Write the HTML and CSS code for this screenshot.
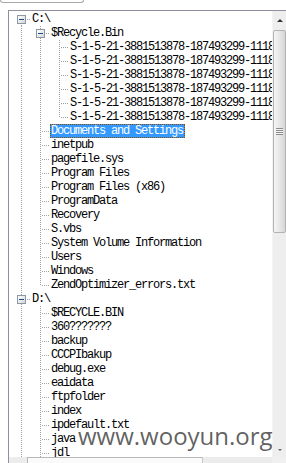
FILE: index.html
```html
<!DOCTYPE html>
<html>
<head>
<meta charset="utf-8">
<link rel="stylesheet" href="styles.css">
</head>
<body>
<div class="topbox"></div>
<div class="panel">
  <div class="tree">
    <div class="row"><i class="g fm"><b class="box"></b></i><span class="lbl">C:\</span></div>
    <div class="row"><i class="g v"></i><i class="g t"><b class="box"></b></i><span class="lbl">$Recycle.Bin</span></div>
    <div class="row"><i class="g v"></i><i class="g v"></i><i class="g t"></i><span class="lbl">S-1-5-21-3881513878-187493299-1118740447-500</span></div>
    <div class="row"><i class="g v"></i><i class="g v"></i><i class="g t"></i><span class="lbl">S-1-5-21-3881513878-187493299-1118740447-1000</span></div>
    <div class="row"><i class="g v"></i><i class="g v"></i><i class="g t"></i><span class="lbl">S-1-5-21-3881513878-187493299-1118740447-1001</span></div>
    <div class="row"><i class="g v"></i><i class="g v"></i><i class="g t"></i><span class="lbl">S-1-5-21-3881513878-187493299-1118740447-1002</span></div>
    <div class="row"><i class="g v"></i><i class="g v"></i><i class="g t"></i><span class="lbl">S-1-5-21-3881513878-187493299-1118740447-1003</span></div>
    <div class="row"><i class="g v"></i><i class="g v"></i><i class="g l"></i><span class="lbl">S-1-5-21-3881513878-187493299-1118740447-1004</span></div>
    <div class="row"><i class="g v"></i><i class="g t"></i><span class="lbl sel">Documents and Settings</span></div>
    <div class="row"><i class="g v"></i><i class="g t"></i><span class="lbl">inetpub</span></div>
    <div class="row"><i class="g v"></i><i class="g t"></i><span class="lbl">pagefile.sys</span></div>
    <div class="row"><i class="g v"></i><i class="g t"></i><span class="lbl">Program Files</span></div>
    <div class="row"><i class="g v"></i><i class="g t"></i><span class="lbl">Program Files (x86)</span></div>
    <div class="row"><i class="g v"></i><i class="g t"></i><span class="lbl">ProgramData</span></div>
    <div class="row"><i class="g v"></i><i class="g t"></i><span class="lbl">Recovery</span></div>
    <div class="row"><i class="g v"></i><i class="g t"></i><span class="lbl">S.vbs</span></div>
    <div class="row"><i class="g v"></i><i class="g t"></i><span class="lbl">System Volume Information</span></div>
    <div class="row"><i class="g v"></i><i class="g t"></i><span class="lbl">Users</span></div>
    <div class="row"><i class="g v"></i><i class="g t"></i><span class="lbl">Windows</span></div>
    <div class="row"><i class="g v"></i><i class="g l"></i><span class="lbl">ZendOptimizer_errors.txt</span></div>
    <div class="row"><i class="g t"><b class="box"></b></i><span class="lbl">D:\</span></div>
    <div class="row"><i class="g v"></i><i class="g t"></i><span class="lbl">$RECYCLE.BIN</span></div>
    <div class="row"><i class="g v"></i><i class="g t"></i><span class="lbl">360???????</span></div>
    <div class="row"><i class="g v"></i><i class="g t"></i><span class="lbl">backup</span></div>
    <div class="row"><i class="g v"></i><i class="g t"></i><span class="lbl">CCCPIbakup</span></div>
    <div class="row"><i class="g v"></i><i class="g t"></i><span class="lbl">debug.exe</span></div>
    <div class="row"><i class="g v"></i><i class="g t"></i><span class="lbl">eaidata</span></div>
    <div class="row"><i class="g v"></i><i class="g t"></i><span class="lbl">ftpfolder</span></div>
    <div class="row"><i class="g v"></i><i class="g t"></i><span class="lbl">index</span></div>
    <div class="row"><i class="g v"></i><i class="g t"></i><span class="lbl">ipdefault.txt</span></div>
    <div class="row"><i class="g v"></i><i class="g t"></i><span class="lbl">java</span></div>
    <div class="row"><i class="g v"></i><i class="g t"></i><span class="lbl">jdl</span></div>
    <div class="row"><i class="g v"></i><i class="g t"></i><span class="lbl">log</span></div>
  </div>
  <div class="vscroll">
    <div class="arrow up"></div>
    <div class="thumb"><span class="grip"></span></div>
    <div class="arrow down"></div>
  </div>
  <div class="hscroll">
    <div class="harrow"></div>
    <div class="hthumb"></div>
  </div>
  <div class="corner"></div>
</div>
<div class="watermark">www.wooyun.org</div>
</body>
</html>
```
FILE: styles.css
```css
html, body {
  margin: 0;
  padding: 0;
  background: #fff;
}
body {
  width: 286px;
  height: 463px;
  overflow: hidden;
  position: relative;
  font-family: "Liberation Mono", "Noto Sans CJK SC", monospace;
  font-size: 12px;
  letter-spacing: -1.2px;
  color: #000;
}
.topbox {
  width: 82px;
  height: 2px;
  border: 1px solid #a9a9a9;
  border-top: none;
  border-radius: 0 0 3px 3px;
  box-sizing: content-box;
}
.panel {
  margin: 7px 0 0 8px;
  height: 453px;
  border-top: 1px solid #8e8f9f;
  border-left: 1px solid #8e8f9f;
  display: grid;
  grid-template-columns: 1fr 14px;
  grid-template-rows: 446px 6px;
  overflow: hidden;
}
.tree {
  padding: 1px 0 0 3px;
  overflow: hidden;
}
.row {
  display: flex;
  height: 14px;
  align-items: stretch;
  white-space: nowrap;
}
.g {
  flex: none;
  width: 19px;
  height: 14px;
  position: relative;
}
.g::before, .g::after {
  content: "";
  position: absolute;
}
.v::before, .t::before {
  left: 9px;
  top: 0;
  width: 1px;
  height: 14px;
  background: repeating-linear-gradient(to bottom, #a0a0a0 0 1px, transparent 1px 2px);
}
.l::before {
  left: 9px;
  top: 0;
  width: 1px;
  height: 8px;
  background: repeating-linear-gradient(to bottom, #a0a0a0 0 1px, transparent 1px 2px);
}
.fm::before {
  left: 9px;
  top: 7px;
  width: 1px;
  height: 7px;
  background: repeating-linear-gradient(to bottom, #a0a0a0 0 1px, transparent 1px 2px);
}
.t::after, .l::after, .fm::after {
  left: 10px;
  top: 7px;
  width: 9px;
  height: 1px;
  background: repeating-linear-gradient(to right, transparent 0 1px, #a0a0a0 1px 2px);
}
.box {
  position: absolute;
  left: 5px;
  top: 3px;
  width: 9px;
  height: 9px;
  box-sizing: border-box;
  border: 1px solid #8c97a5;
  background: linear-gradient(135deg, #ffffff 0%, #e8e8e8 60%, #cfd3d8 100%);
  z-index: 1;
}
.box::after {
  content: "";
  position: absolute;
  left: 1px;
  top: 3px;
  width: 5px;
  height: 1px;
  background: #1f4a9a;
}
.lbl {
  display: block;
  line-height: 14px;
  padding: 0 1px;
  box-sizing: border-box;
  height: 14px;
}
.sel {
  background: #3399ff;
  color: #fff;
  border: 1px dotted #8a4a00;
  line-height: 12px;
  padding: 0 1px 0 0;
}
.vscroll {
  grid-row: 1;
  grid-column: 2;
  background: #eeeeee;
  display: flex;
  flex-direction: column;
  border-left: 1px solid #f4f4f4;
}
.arrow {
  height: 18px;
  flex: none;
  display: flex;
  justify-content: center;
  align-items: center;
}
.arrow.up::after {
  content: "";
  border-left: 3px solid transparent;
  border-right: 3px solid transparent;
  border-bottom: 3px solid #333;
}
.arrow.down {
  margin-top: auto;
  height: 14px;
}
.arrow.down::after {
  content: "";
  border-left: 2px solid transparent;
  border-right: 2px solid transparent;
  border-top: 2px solid #666;
}
.thumb {
  height: 203px;
  margin: 1px 0 0 0;
  box-sizing: border-box;
  border: 1px solid #b2b2b2;
  border-radius: 2px;
  background: linear-gradient(to right, #f6f6f6, #e4e4e4 60%, #d6d6d6);
  display: flex;
  align-items: center;
  justify-content: center;
}
.grip {
  width: 7px;
  height: 7px;
  background: repeating-linear-gradient(to bottom, #8a8a8a 0 1px, #f5f5f5 1px 2px);
}
.hscroll {
  grid-row: 2;
  grid-column: 1;
  background: #ececec;
  display: flex;
}
.harrow {
  width: 18px;
  flex: none;
}
.hthumb {
  width: 174px;
  flex: none;
  border-top: 1px solid #b8b8b8;
  border-left: 1px solid #b8b8b8;
  border-right: 1px solid #c8c8c8;
  background: #fafafa;
}
.corner {
  grid-row: 2;
  grid-column: 2;
  background: #f0f0f0;
}
.watermark {
  position: absolute;
  left: 78px;
  top: 421px;
  font-family: "Open Sans", "Liberation Sans", sans-serif;
  font-size: 24px;
  letter-spacing: 0;
  line-height: 30px;
  color: rgba(70, 70, 70, 0.85);
}
```
